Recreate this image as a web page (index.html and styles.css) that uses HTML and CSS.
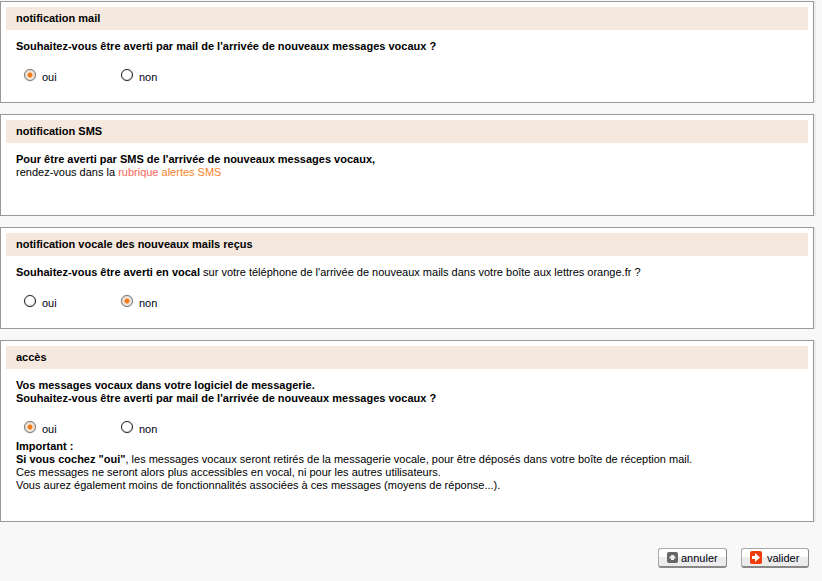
FILE: index.html
```html
<!DOCTYPE html>
<html lang="fr">
<head>
    <meta charset="UTF-8">
    <meta name="viewport" content="width=device-width, initial-scale=1.0">
    <title>Notifications</title>
    <link rel="stylesheet" href="styles.css">
</head>
<body>
    <form class="page">
        <div class="panel panel-short">
            <h3>notification mail</h3>
            <p class="question"><b>Souhaitez-vous être averti par mail de l'arrivée de nouveaux messages vocaux ?</b></p>
            <div class="choices">
                <label class="choice"><input type="radio" name="mail" checked> oui</label>
                <label class="choice"><input type="radio" name="mail"> non</label>
            </div>
        </div>

        <div class="panel panel-short">
            <h3>notification SMS</h3>
            <p class="question"><b>Pour être averti par SMS de l'arrivée de nouveaux messages vocaux,</b><br>
                rendez-vous dans la <a href="#" class="link-sms"><span class="link-start">rubrique</span> alertes SMS</a></p>
        </div>

        <div class="panel panel-short">
            <h3>notification vocale des nouveaux mails reçus</h3>
            <p class="question"><b>Souhaitez-vous être averti en vocal</b> sur votre téléphone de l'arrivée de nouveaux mails dans votre boîte aux lettres orange.fr ?</p>
            <div class="choices">
                <label class="choice"><input type="radio" name="vocal"> oui</label>
                <label class="choice"><input type="radio" name="vocal" checked> non</label>
            </div>
        </div>

        <div class="panel panel-tall">
            <h3>accès</h3>
            <p class="question"><b>Vos messages vocaux dans votre logiciel de messagerie.<br>
                Souhaitez-vous être averti par mail de l'arrivée de nouveaux messages vocaux ?</b></p>
            <div class="choices">
                <label class="choice"><input type="radio" name="acces" checked> oui</label>
                <label class="choice"><input type="radio" name="acces"> non</label>
            </div>
            <p class="notice"><b>Important :</b><br>
                <b>Si vous cochez "oui"</b>, les messages vocaux seront retirés de la messagerie vocale, pour être déposés dans votre boîte de réception mail.<br>
                Ces messages ne seront alors plus accessibles en vocal, ni pour les autres utilisateurs.<br>
                Vous aurez également moins de fonctionnalités associées à ces messages (moyens de réponse...).</p>
        </div>

        <div class="actions">
            <button type="button" class="btn btn-cancel">
                <svg class="icon" width="11" height="11" viewBox="0 0 11 11"><rect width="11" height="11" rx="2" fill="#666"/><path d="M4 3h3v1.500h1.500v2H7V8H4V6.500H2.500v-2H4z" fill="#eee"/></svg>
                annuler
            </button>
            <button type="button" class="btn btn-ok">
                <svg class="icon" width="12" height="13" viewBox="0 0 12 13"><rect width="12" height="13" rx="2" fill="#f03c0a"/><path d="M2 5h3V2l5 4.500-5 4.500V8H2z" fill="#fff"/></svg>
                valider
            </button>
        </div>
    </form>
</body>
</html>
```

FILE: styles.css
```css
html, body {
    margin: 0;
    padding: 0;
}
body {
    font-family: "Liberation Sans", Arial, sans-serif;
    font-size: 11px;
    line-height: 13px;
    color: #000;
    background-color: #f8f8f8;
}
.page {
    width: 814px;
    padding-top: 1px;
}
.panel {
    box-sizing: border-box;
    background: #fff;
    border: 1px solid #999;
    box-shadow: 2px 0 0 #ececec;
    padding: 5px 5px 0;
    margin-bottom: 11px;
}
.panel-short {
    height: 102px;
}
.panel-tall {
    height: 182px;
}
h3 {
    margin: 0;
    height: 23px;
    line-height: 23px;
    padding-left: 10px;
    font-size: 11px;
    font-weight: bold;
    background: #f5e9df;
}
.question {
    margin: 10px 0 0 10px;
}
.choices {
    display: flex;
    margin: 18px 0 0 18px;
}
.choice {
    display: flex;
    align-items: flex-start;
    width: 97px;
    gap: 6px;
    color: #001;
}
input[type="radio"] {
    appearance: none;
    box-sizing: border-box;
    flex: none;
    width: 12px;
    height: 12px;
    margin: -2px 0 0;
    border: 1px solid #222;
    border-radius: 50%;
    background: radial-gradient(circle at 45% 40%, #fff 45%, #ccc);
    box-shadow: 0 0 1px #999;
}
input[type="radio"]:checked {
    border-color: #777;
    background: radial-gradient(circle, #f07a1a 0 2px, #f6e6d8 3px, #d8d8d8);
}
.notice {
    margin: 4px 0 0 10px;
}
.link-sms {
    color: #f7842c;
    text-decoration: none;
}
.link-start {
    color: #f8665a;
}
.actions {
    display: flex;
    justify-content: flex-end;
    gap: 14px;
    padding: 15px 5px 0 0;
}
.btn {
    display: flex;
    align-items: center;
    box-sizing: border-box;
    height: 20px;
    padding: 0 0 0 8px;
    font: 11px "Liberation Sans", Arial, sans-serif;
    color: #001;
    background: linear-gradient(#fff 50%, #ececec 50%);
    border: 1px solid #aaa;
    border-right-color: #888;
    border-bottom: 2px solid #888;
    border-radius: 3px;
}
.btn-cancel {
    width: 69px;
    gap: 3px;
}
.btn-ok {
    width: 68px;
    gap: 5px;
}
```
